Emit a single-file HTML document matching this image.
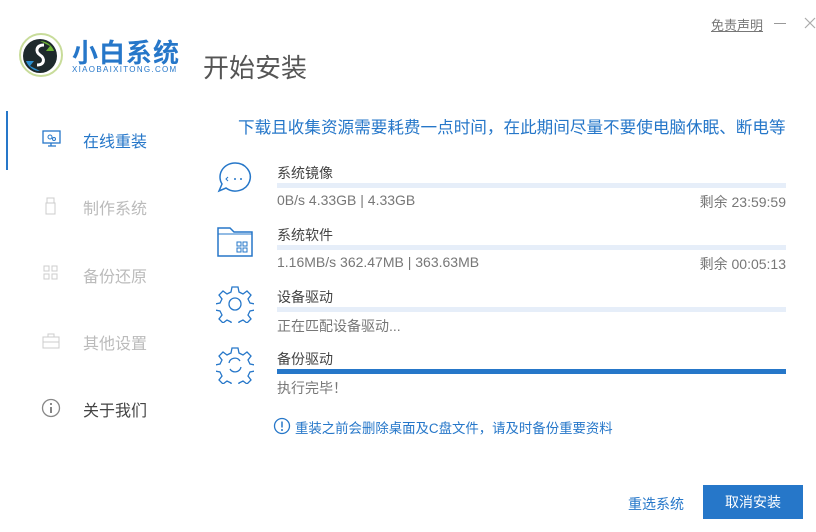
<!DOCTYPE html>
<html><head><meta charset="utf-8"><style>
*{margin:0;padding:0;box-sizing:border-box}
body{width:816px;height:532px;background:#fff;position:relative;overflow:hidden;font-family:"Liberation Sans","Noto Sans CJK SC",sans-serif;}
.a{position:absolute;white-space:nowrap}
.bar{position:absolute;left:277px;width:509px;height:5px;background:#e6eef9}
.t{font-size:14px;color:#444}
.i{font-size:14px;color:#777}
.r{right:30px}
.nav{font-size:16px;left:83px}
</style></head><body>
<div class="a" style="left:711px;top:15px;font-size:13px;color:#777;text-decoration:underline">免责声明</div>
<div class="a" style="left:774px;top:23px;width:12px;height:1px;background:#999"></div>
<svg class="a" style="left:804px;top:17px" width="12" height="12"><path d="M1 1L11 11M11 1L1 11" stroke="#aaa" stroke-width="1.2"/></svg>
<svg class="a" style="left:18px;top:31px" width="46" height="48" viewBox="0 0 46 48">
<circle cx="23" cy="24" r="21" fill="none" stroke="#c8dc9a" stroke-width="2"/>
<circle cx="22" cy="25" r="17" fill="#1e2a2c"/>
<path d="M22 10a15 15 0 0 1 14 10l-8 0l4-5z" fill="#6cb533"/>
<path d="M22 40a15 15 0 0 1-14-10l8 0l-4 5z" fill="#2a8fd0"/>
<path d="M26 14c-8 0-9 7-4 10s5 10-3 10" stroke="#fff" stroke-width="3" fill="none"/>
</svg>
<div class="a" style="left:72px;top:33px;font-size:26px;font-weight:bold;color:#2677c9;letter-spacing:1px">小白系统</div>
<div class="a" style="left:72px;top:65px;font-size:8px;color:#2677c9;letter-spacing:1.3px">XIAOBAIXITONG.COM</div>
<div class="a" style="left:203px;top:48px;font-size:26px;color:#555">开始安装</div>

<div class="a" style="left:6px;top:111px;width:2px;height:59px;background:#2677c9"></div>
<svg class="a" style="left:42px;top:130px" width="20" height="18"><rect x="1" y="1" width="17" height="12" fill="none" stroke="#2677c9" stroke-width="1.3"/><circle cx="8" cy="7" r="2" fill="none" stroke="#2677c9"/><circle cx="12" cy="9" r="1.5" fill="none" stroke="#2677c9"/><path d="M9 13v3M6 16h8" stroke="#2677c9" stroke-width="1.3"/></svg>
<div class="a nav" style="top:128px;color:#2677c9">在线重装</div>
<svg class="a" style="left:45px;top:197px" width="12" height="18"><rect x="2" y="1" width="7" height="5" fill="none" stroke="#ccc"/><rect x="1" y="6" width="9" height="11" fill="none" stroke="#ccc"/></svg>
<div class="a nav" style="top:195px;color:#bbb">制作系统</div>
<svg class="a" style="left:43px;top:265px" width="16" height="16"><rect x="1" y="1" width="5" height="5" fill="none" stroke="#ccc"/><rect x="9" y="1" width="5" height="5" fill="none" stroke="#ccc"/><rect x="1" y="9" width="5" height="5" fill="none" stroke="#ccc"/><rect x="9" y="9" width="5" height="5" fill="none" stroke="#ccc"/></svg>
<div class="a nav" style="top:263px;color:#bbb">备份还原</div>
<svg class="a" style="left:42px;top:333px" width="18" height="16"><rect x="1" y="4" width="16" height="11" fill="none" stroke="#ccc"/><path d="M6 4V1h6v3M1 9h16" stroke="#ccc" fill="none"/></svg>
<div class="a nav" style="top:330px;color:#bbb">其他设置</div>
<svg class="a" style="left:41px;top:398px" width="20" height="20"><circle cx="10" cy="10" r="8.5" fill="none" stroke="#888" stroke-width="1.3"/><path d="M10 9v6" stroke="#666" stroke-width="1.6"/><circle cx="10" cy="6" r="1" fill="#666"/></svg>
<div class="a nav" style="top:397px;color:#444">关于我们</div>

<div class="a" style="left:238px;top:114px;font-size:16.6px;color:#2677c9">下载且收集资源需要耗费一点时间，在此期间尽量不要使电脑休眠、断电等</div>

<svg class="a" style="left:216px;top:160px" width="38" height="36"><path d="M19 3a15 14 0 1 1-9 25l-7 3 3-7A15 14 0 0 1 19 3z" fill="none" stroke="#2677c9" stroke-width="1.5"/><path d="M12 17l-2 2 2 2" stroke="#2677c9" fill="none"/><circle cx="19" cy="19" r="1" fill="#2677c9"/><circle cx="25" cy="19" r="1" fill="#2677c9"/></svg>
<div class="a t" style="left:277px;top:163px">系统镜像</div>
<div class="bar" style="top:183px"></div>
<div class="a i" style="left:277px;top:192px">0B/s 4.33GB | 4.33GB</div>
<div class="a i r" style="top:192px">剩余 23:59:59</div>

<svg class="a" style="left:216px;top:225px" width="38" height="34"><path d="M2 3h12l4 4h18v24H2z" fill="none" stroke="#2677c9" stroke-width="1.5"/><path d="M2 9h34" stroke="#2677c9"/><rect x="21" y="17" width="4" height="4" fill="none" stroke="#2677c9"/><rect x="27" y="17" width="4" height="4" fill="none" stroke="#2677c9"/><rect x="21" y="23" width="4" height="4" fill="none" stroke="#2677c9"/><rect x="27" y="23" width="4" height="4" fill="none" stroke="#2677c9"/></svg>
<div class="a t" style="left:277px;top:225px">系统软件</div>
<div class="bar" style="top:245px"></div>
<div class="a i" style="left:277px;top:254px">1.16MB/s 362.47MB | 363.63MB</div>
<div class="a i r" style="top:254px">剩余 00:05:13</div>

<svg class="a" style="left:216px;top:285px" width="38" height="38" viewBox="0 0 38 38"><path d="M16 2h6l1 5 4 2 4-3 4 4-3 4 2 4 5 1v6l-5 1-2 4 3 4-4 4-4-3-4 2-1 5h-6l-1-5-4-2-4 3-4-4 3-4-2-4-5-1v-6l5-1 2-4-3-4 4-4 4 3 4-2z" fill="none" stroke="#2677c9" stroke-width="1.3"/><circle cx="19" cy="19" r="6" fill="none" stroke="#2677c9" stroke-width="1.3"/></svg>
<div class="a t" style="left:277px;top:287px">设备驱动</div>
<div class="bar" style="top:307px"></div>
<div class="a i" style="left:277px;top:316px">正在匹配设备驱动...</div>

<svg class="a" style="left:216px;top:346px" width="38" height="38" viewBox="0 0 38 38"><path d="M16 2h6l1 5 4 2 4-3 4 4-3 4 2 4 5 1v6l-5 1-2 4 3 4-4 4-4-3-4 2-1 5h-6l-1-5-4-2-4 3-4-4 3-4-2-4-5-1v-6l5-1 2-4-3-4 4-4 4 3 4-2z" fill="none" stroke="#2677c9" stroke-width="1.3"/><path d="M13 17a6 6 0 0 1 11-2M25 21a6 6 0 0 1-11 2" fill="none" stroke="#2677c9" stroke-width="1.3"/></svg>
<div class="a t" style="left:277px;top:349px">备份驱动</div>
<div class="bar" style="top:369px;background:#2677c9"></div>
<div class="a i" style="left:277px;top:378px">执行完毕！</div>

<svg class="a" style="left:273px;top:417px" width="18" height="18"><circle cx="9" cy="9" r="7.5" fill="none" stroke="#2677c9" stroke-width="1.3"/><path d="M9 4.5v6" stroke="#2677c9" stroke-width="1.5"/><circle cx="9" cy="13" r="1" fill="#2677c9"/></svg>
<div class="a" style="left:295px;top:417px;font-size:13.4px;color:#2677c9">重装之前会删除桌面及C盘文件，请及时备份重要资料</div>

<div class="a" style="left:628px;top:494px;font-size:14px;color:#2677c9">重选系统</div>
<div class="a" style="left:703px;top:485px;width:100px;height:34px;background:#2677c9;color:#fff;font-size:14px;line-height:34px;text-align:center">取消安装</div>
</body></html>
